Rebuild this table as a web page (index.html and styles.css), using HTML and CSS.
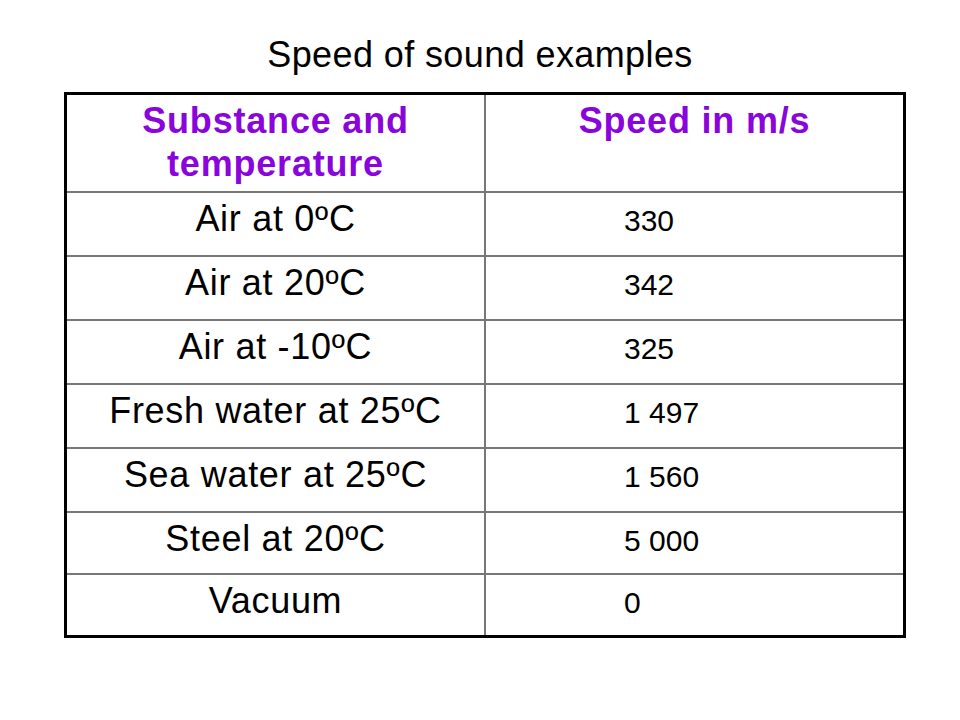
FILE: index.html
```html
<!DOCTYPE html>
<html lang="en">
	<head>
		<meta charset="UTF-8" />
		<meta name="viewport" content="width=device-width, initial-scale=1.0" />
		<title>Speed of sound examples</title>
		<link rel="stylesheet" href="styles.css">
	</head>
	<body>
		<div class="slide">
			<h1 class="slide-title">Speed of sound examples</h1>
			<table class="sound-table">
				<thead>
					<tr>
						<th>Substance and temperature</th>
						<th>Speed in m/s</th>
					</tr>
				</thead>
				<tbody>
					<tr>
						<td class="substance">Air at 0ºC</td>
						<td class="speed">330</td>
					</tr>
					<tr>
						<td class="substance">Air at 20ºC</td>
						<td class="speed">342</td>
					</tr>
					<tr>
						<td class="substance">Air at -10ºC</td>
						<td class="speed">325</td>
					</tr>
					<tr>
						<td class="substance">Fresh water at 25ºC</td>
						<td class="speed">1 497</td>
					</tr>
					<tr>
						<td class="substance">Sea water at 25ºC</td>
						<td class="speed">1 560</td>
					</tr>
					<tr class="short">
						<td class="substance">Steel at 20ºC</td>
						<td class="speed">5 000</td>
					</tr>
					<tr class="short">
						<td class="substance">Vacuum</td>
						<td class="speed">0</td>
					</tr>
				</tbody>
			</table>
		</div>
	</body>
</html>
```

FILE: styles.css
```css
* {
	padding: 0;
	margin: 0;
	box-sizing: border-box;
}
body {
	background-color: #fff;
	font-family: "Liberation Sans", Arial, sans-serif;
	color: #000;
}
.slide {
	width: 960px;
	height: 720px;
	padding: 35px 0 0 64px;
}
.slide-title {
	width: 832px;
	font-size: 36px;
	font-weight: normal;
	line-height: 40px;
	text-align: center;
	letter-spacing: 0.4px;
}
.sound-table {
	margin-top: 17px;
	width: 842px;
	table-layout: fixed;
	border-collapse: separate;
	border-spacing: 0;
	border: 3px solid #000;
}
.sound-table th {
	height: 96px;
	padding: 4px 10px 0;
	vertical-align: top;
	font-size: 36px;
	line-height: 43px;
	font-weight: bold;
	color: #8a05dc;
	text-align: center;
	letter-spacing: 0.8px;
}
.sound-table th + th,
.sound-table td + td {
	border-left: 2px solid #777;
}
.sound-table th:first-child {
	width: 417px;
}
.sound-table td {
	height: 64px;
	border-top: 2px solid #777;
	vertical-align: baseline;
	padding-top: 6px;
	line-height: 40px;
}
.sound-table tr.short td {
	height: 62px;
}
.substance {
	font-size: 36px;
	text-align: center;
	letter-spacing: 0.7px;
}
.speed {
	font-size: 30px;
	padding-left: 138px;
}
```
